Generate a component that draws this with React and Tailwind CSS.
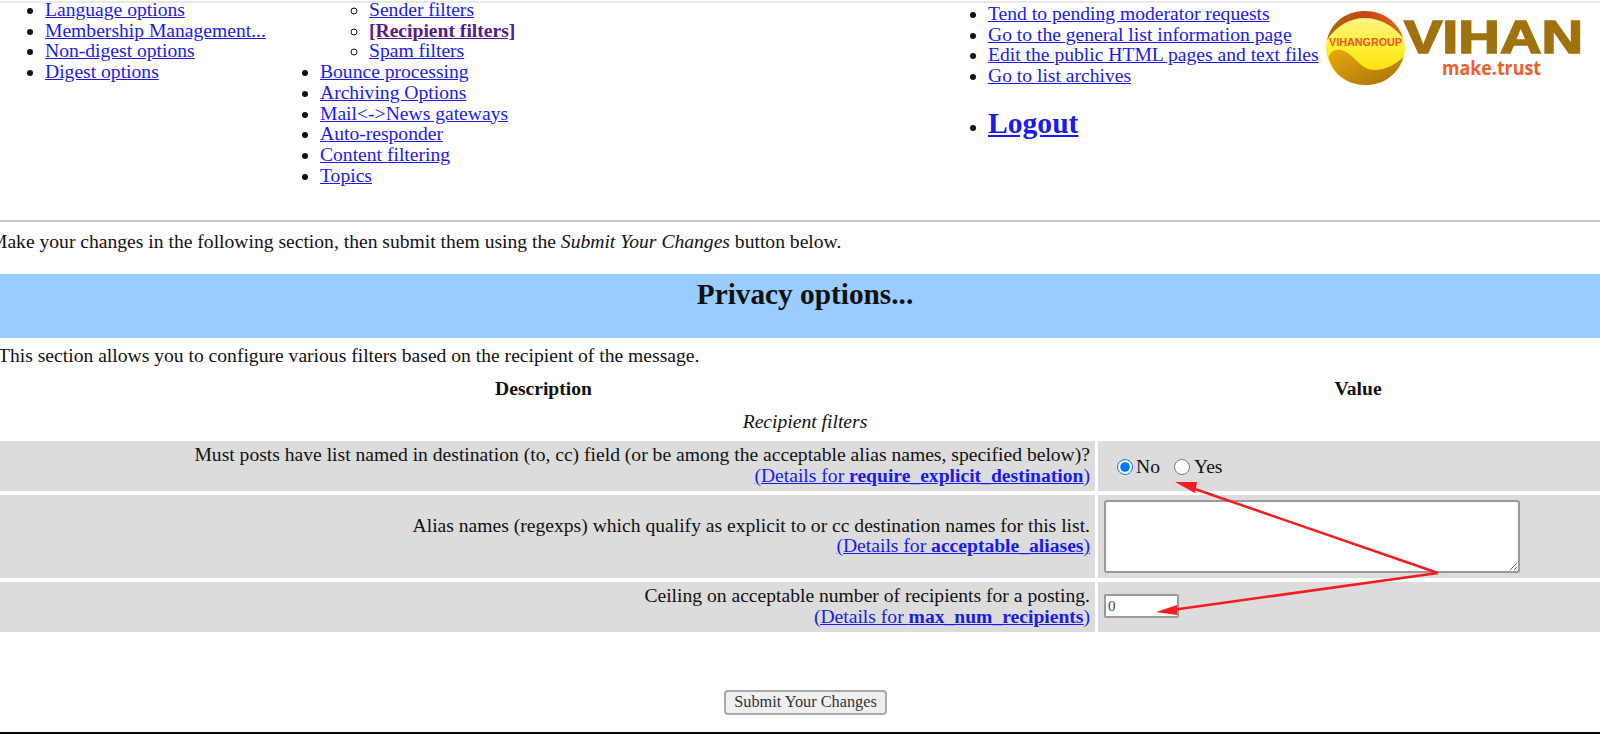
import React from "react";

const leftLinks = ["Language options", "Membership Management...", "Non-digest options", "Digest options"];
const middleLinks = ["Bounce processing", "Archiving Options", "Mail<->News gateways", "Auto-responder", "Content filtering", "Topics"];
const rightLinks = [
  "Tend to pending moderator requests",
  "Go to the general list information page",
  "Edit the public HTML pages and text files",
  "Go to list archives",
];

function A({ className = "", children }) {
  return (
    <a href="#" className={`text-[#1a1aee] underline ${className}`}>
      {children}
    </a>
  );
}

function Logo() {
  return (
    <svg width="260" height="80" viewBox="0 0 260 80" className="shrink-0">
      <defs>
        <linearGradient id="sun" x1="0" y1="0" x2="0" y2="1">
          <stop offset="0" stopColor="#fff59a" />
          <stop offset="0.5" stopColor="#ffef30" />
          <stop offset="1" stopColor="#f8d800" />
        </linearGradient>
        <linearGradient id="swoosh" x1="0" y1="0" x2="1" y2="1">
          <stop offset="0" stopColor="#eaa90e" />
          <stop offset="1" stopColor="#a4700a" />
        </linearGradient>
        <linearGradient id="rim" x1="0" y1="0" x2="1" y2="0">
          <stop offset="0" stopColor="#a8680c" />
          <stop offset="0.55" stopColor="#c8441a" />
          <stop offset="1" stopColor="#e06a20" />
        </linearGradient>
      </defs>
      <ellipse cx="39.5" cy="38" rx="39.5" ry="37" fill="url(#sun)" />
      <path d="M1 30 C6 10 22 1 39 1 C57 1 72 12 77 28 C66 14 52 8 39 8 C24 8 10 16 1 30 Z" fill="url(#rim)" />
      <path d="M2.5 47 C5 41 10 39 15 40 C28 43 34 60 48 60 C60 60 70 54 77.5 47 C72 65 57 75 39.5 75 C21 75 7 64 2.5 47 Z" fill="url(#swoosh)" />
      <text x="39.5" y="36" textAnchor="middle" fontFamily="'Liberation Sans', sans-serif" fontWeight="700" fontSize="11.5" fill="#f0522a" textLength="73" lengthAdjust="spacingAndGlyphs">
        VIHANGROUP
      </text>
      <text x="78" y="43" fontFamily="'Liberation Sans', sans-serif" fontWeight="700" fontSize="46" fill="#a0720e" stroke="#a0720e" strokeWidth="1.6" textLength="179" lengthAdjust="spacingAndGlyphs">
        VIHAN
      </text>
      <text x="116" y="65" fontFamily="'Open Sans', sans-serif" fontWeight="700" fontSize="19" fill="#f0602c" textLength="99" lengthAdjust="spacingAndGlyphs">
        make.trust
      </text>
    </svg>
  );
}

function FilterRow({ text, option, height, children }) {
  return (
    <div className="flex gap-[3px]" style={{ height }}>
      <div className="flex w-[1095px] flex-col justify-center bg-[#dcdcdc] pr-[5px] text-right">
        <div>{text}</div>
        <div>
          <A>
            (Details for <b>{option}</b>)
          </A>
        </div>
      </div>
      <div className="flex-1 bg-[#dcdcdc] pl-[6px]">{children}</div>
    </div>
  );
}

export default function App() {
  return (
    <div className="relative h-[734px] w-[1600px] overflow-hidden bg-white font-['Liberation_Serif',serif] text-[19.6px] leading-[20.7px] text-[#111]">
      <div className="mt-[1px] h-[2px] bg-[#e8e8e8]" />

      <div className="flex h-[217px] items-start">
        <ul className="ml-[45px] mt-[-3px] w-[275px] list-disc">
          {leftLinks.map((l) => (
            <li key={l}>
              <A>{l}</A>
            </li>
          ))}
        </ul>

        <div className="mt-[-3px] w-[668px]">
          <ul className="ml-[49px] list-[circle]">
            <li><A>Sender filters</A></li>
            <li><A className="font-bold !text-[#551a8b]">[Recipient filters]</A></li>
            <li><A>Spam filters</A></li>
          </ul>
          <ul className="list-disc">
            {middleLinks.map((l) => (
              <li key={l}>
                <A>{l}</A>
              </li>
            ))}
          </ul>
        </div>

        <div className="mt-[1px] w-[338px] whitespace-nowrap">
          <ul className="list-disc">
            {rightLinks.map((l) => (
              <li key={l}>
                <A>{l}</A>
              </li>
            ))}
          </ul>
          <ul className="mt-[19px] list-disc">
            <li className="leading-[34px]">
              <A className="text-[29.6px] font-bold">Logout</A>
            </li>
          </ul>
        </div>

        <div className="mt-[7px]">
          <Logo />
        </div>
      </div>

      <div className="h-[2px] bg-[#c8c8c8]" />

      <p className="ml-[-10px] mt-[10px] whitespace-nowrap">
        Make your changes in the following section, then submit them using the <i>Submit Your Changes</i> button below.
      </p>

      <div className="mt-[21px] h-[64px] bg-[#99ccff] pl-[10px] pt-[5px] text-center text-[29.3px] font-bold leading-[31px]">
        Privacy options...
      </div>

      <p className="ml-[-2px] mt-[8px] whitespace-nowrap">This section allows you to configure various filters based on the recipient of the message.</p>

      <div className="mt-[13px] flex font-bold">
        <div className="w-[1087px] text-center">Description</div>
        <div className="flex-1 pl-[29px] text-center">Value</div>
      </div>

      <div className="mt-[12px] pl-[10px] text-center italic">Recipient filters</div>

      <div className="mt-[8px] flex flex-col gap-[4px]">
        <FilterRow
          text="Must posts have list named in destination (to, cc) field (or be among the acceptable alias names, specified below)?"
          option="require_explicit_destination"
          height={50}
        >
          <div className="flex items-center pl-[13px] pt-[16px]">
            <input type="radio" name="dest" defaultChecked className="h-[16px] w-[16px]" />
            <span className="ml-[3px]">No</span>
            <input type="radio" name="dest" className="ml-[14px] h-[16px] w-[16px]" />
            <span className="ml-[4px]">Yes</span>
          </div>
        </FilterRow>
        <FilterRow
          text="Alias names (regexps) which qualify as explicit to or cc destination names for this list."
          option="acceptable_aliases"
          height={83}
        >
          <textarea className="mt-[5px] block h-[73px] w-[416px] rounded-[3px] border-2 border-[#9a9a9a] bg-white" />
        </FilterRow>
        <FilterRow
          text="Ceiling on acceptable number of recipients for a posting."
          option="max_num_recipients"
          height={50}
        >
          <input
            type="text"
            defaultValue="0"
            className="mt-[12px] block h-[24px] w-[75px] rounded-[2px] border-2 border-[#9a9a9a] bg-white pl-[2px] pt-[1px] text-[15px] text-[#444] outline-none"
          />
        </FilterRow>
      </div>

      <div className="mt-[58px] flex justify-center pl-[11px]">
        <button className="h-[25px] w-[163px] rounded-[4px] border-2 border-[#aaaaaa] bg-[#efefef] text-[16.3px] leading-none text-[#333]">
          Submit Your Changes
        </button>
      </div>

      <div className="absolute bottom-0 left-0 h-[2px] w-full bg-black" />

      <svg className="pointer-events-none absolute left-0 top-0" width="1600" height="734" viewBox="0 0 1600 734">
        <path d="M1438 573 L1192 488 M1438 573 L1172 610" stroke="#f41c1c" strokeWidth="2.5" fill="none" />
        <path d="M1175 482 L1197 482 L1195 493 Z" fill="#f41c1c" />
        <path d="M1156 612 L1177 605 L1177 615 Z" fill="#f41c1c" />
      </svg>
    </div>
  );
}
